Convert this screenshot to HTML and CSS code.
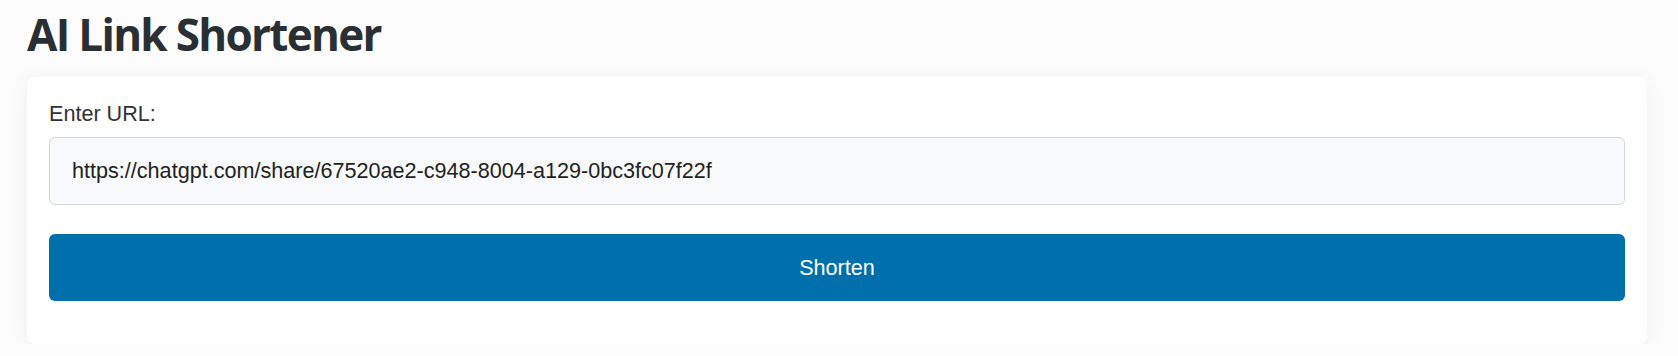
FILE: index.html
```html
<!DOCTYPE html>
<html lang="en">
<head>
<meta charset="utf-8">
<title>AI Link Shortener</title>
<link rel="stylesheet" href="styles.css">
</head>
<body>
  <div class="page">
    <h1 class="title">AI Link Shortener</h1>
    <form class="card">
      <label class="label" for="url">Enter URL:</label>
      <input class="url-input" id="url" type="text" value="https://chatgpt.com/share/67520ae2-c948-8004-a129-0bc3fc07f22f">
      <button class="btn" type="button">Shorten</button>
    </form>
  </div>
</body>
</html>
```

FILE: styles.css
```css
* { box-sizing: border-box; }

html, body {
  margin: 0;
  padding: 0;
  background: #fcfcfd;
}

body {
  font-family: "Liberation Sans", Arial, sans-serif;
  color: #333;
}

.page {
  width: 1620px;
  margin-left: 27px;
  padding-top: 5px;
}

.title {
  margin: 0 0 14px 0;
  font-family: "Open Sans", "Noto Sans", sans-serif;
  font-weight: 700;
  font-size: 44px;
  line-height: 58px;
  letter-spacing: -1.7px;
  color: #2a2f34;
}

.card {
  display: flex;
  flex-direction: column;
  background: #ffffff;
  border-radius: 8px;
  box-shadow: 0 4px 24px rgba(0, 0, 0, 0.06);
  padding: 24px 22px 43px 22px;
}

.label {
  font-size: 21.6px;
  line-height: 25px;
  color: #333333;
  margin-bottom: 11px;
}

.url-input {
  height: 68px;
  width: 100%;
  padding: 0 22px;
  font-family: "Liberation Sans", Arial, sans-serif;
  font-size: 21.6px;
  color: #222222;
  background: #f8f9fa;
  border: 1px solid #d3d7dc;
  border-radius: 6px;
  outline: none;
}

.btn {
  margin-top: 29px;
  height: 67px;
  width: 100%;
  font-family: "Liberation Sans", Arial, sans-serif;
  font-size: 21.6px;
  color: #ffffff;
  background: #0070ad;
  border: none;
  border-radius: 6px;
  cursor: pointer;
}
```
